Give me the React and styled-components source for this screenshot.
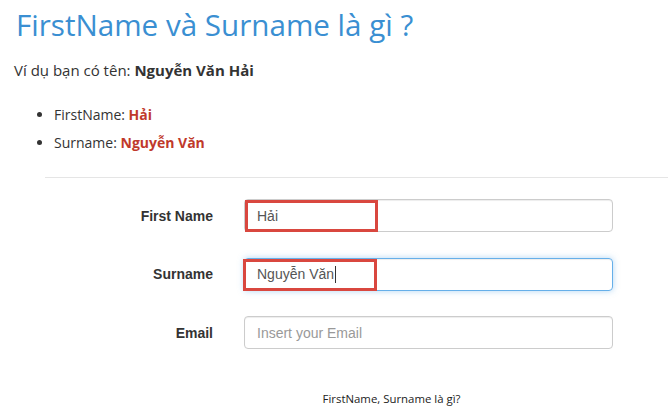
import styled, { createGlobalStyle } from 'styled-components';

const GlobalStyle = createGlobalStyle`
  body {
    margin: 0;
    background: #fff;
    font-family: "Open Sans", "Noto Sans", sans-serif;
    color: #333;
  }
`;

const Page = styled.div`
  padding-left: 14px;
`;

const Title = styled.h1`
  margin: 8px 0 0 2px;
  font-size: 29.6px;
  line-height: 33px;
  font-weight: 400;
  color: #3a8fd2;
`;

const Intro = styled.p`
  margin: 19px 0 0;
  font-size: 15px;
  line-height: 20px;
`;

const List = styled.ul`
  margin: 25px 0 0;
  padding-left: 40px;
  font-size: 14px;
  line-height: 20px;

  li + li {
    margin-top: 8px;
  }
`;

const Highlight = styled.b`
  color: #c0392b;
`;

const FormSection = styled.div`
  margin: 24px 0 0 31px;
  border-top: 1px solid #e5e5e5;
  padding-top: 21px;
`;

const FormGrid = styled.div`
  display: grid;
  grid-template-columns: 168px 369px;
  column-gap: 31px;
  row-gap: 25.5px;
  align-items: center;
`;

const Label = styled.label`
  text-align: right;
  font-family: "Liberation Sans", Arial, sans-serif;
  font-weight: 700;
  font-size: 14px;
  color: #333;
`;

const Field = styled.div`
  position: relative;
  box-sizing: border-box;
  height: 33px;
  display: flex;
  align-items: center;
  padding: 0 12px;
  border: 1px solid ${p => (p.$focused ? '#66afe9' : '#ccc')};
  border-radius: 4px;
  box-shadow: ${p =>
    p.$focused
      ? 'inset 0 1px 1px rgba(0,0,0,.075), 0 0 6px rgba(102,175,233,.5)'
      : 'inset 0 1px 1px rgba(0,0,0,.075)'};
  font-family: "Liberation Sans", Arial, sans-serif;
  font-size: 14px;
  color: ${p => (p.$placeholder ? '#999' : '#555')};
`;

const Caret = styled.span`
  display: inline-block;
  width: 1px;
  height: 17px;
  margin-left: 1px;
  background: #333;
`;

const Mark = styled.span`
  position: absolute;
  top: 0;
  left: ${p => p.$left}px;
  width: ${p => p.$width}px;
  height: 32px;
  box-sizing: border-box;
  border: 3px solid #d9473f;
  pointer-events: none;
`;

const Footer = styled.div`
  margin-top: 42px;
  padding-left: 70px;
  text-align: center;
  font-size: 11.4px;
  line-height: 16px;
  color: #222;
`;

export default function App() {
  return (
    <>
      <GlobalStyle />
      <Page>
        <Title>FirstName và Surname là gì ?</Title>
        <Intro>
          Ví dụ bạn có tên: <b>Nguyễn Văn Hải</b>
        </Intro>
        <List>
          <li>
            FirstName: <Highlight>Hải</Highlight>
          </li>
          <li>
            Surname: <Highlight>Nguyễn Văn</Highlight>
          </li>
        </List>
        <FormSection>
          <FormGrid>
            <Label>First Name</Label>
            <Field>
              Hải
              <Mark $left={0} $width={133} />
            </Field>
            <Label>Surname</Label>
            <Field $focused>
              Nguyễn Văn
              <Caret />
              <Mark $left={-2} $width={134} />
            </Field>
            <Label>Email</Label>
            <Field $placeholder>Insert your Email</Field>
          </FormGrid>
          <Footer>FirstName, Surname là gì?</Footer>
        </FormSection>
      </Page>
    </>
  );
}
